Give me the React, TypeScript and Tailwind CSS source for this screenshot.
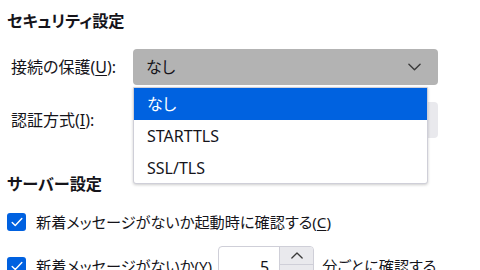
import React from "react";

const Chevron = ({ className = "" }: { className?: string }) => (
  <svg viewBox="0 0 14 8" className={className} fill="none" stroke="currentColor" strokeWidth="1.5" strokeLinecap="round" strokeLinejoin="round">
    <path d="M1 1l6 6 6-6" />
  </svg>
);

const Check = () => (
  <div className="w-[19px] h-[18px] rounded-[3px] bg-[#0061e0] flex items-center justify-center shrink-0">
    <svg viewBox="0 0 16 16" className="w-[14px] h-[14px]" fill="none" stroke="white" strokeWidth="1.6" strokeLinecap="round" strokeLinejoin="round">
      <path d="M2.5 8.5l3.5 3.5 7.5-8" />
    </svg>
  </div>
);

const Key = ({ children }: { children: React.ReactNode }) => <span className="underline underline-offset-2">{children}</span>;

export default function App() {
  return (
    <div className="relative w-[480px] h-[270px] overflow-hidden bg-white text-[#15141a] font-['Noto_Sans','Noto_Sans_CJK_JP',sans-serif] [font-feature-settings:'palt'] text-[16px]">
      <div className="pl-[7px] pt-[9px]">
        {/* Security section */}
        <h2 className="h-[24px] leading-[24px] text-[16.2px] font-bold">セキュリティ設定</h2>

        <div className="mt-[16px] flex items-center">
          <label className="ml-[4px] w-[122px]">
            接続の保護(<Key>U</Key>):
          </label>
          <div className="w-[305px] h-[36px] rounded-[4px] bg-[#b3b3b3] flex items-center justify-between pl-[13px] pr-[17px]">
            <span>なし</span>
            <Chevron className="w-[13px] h-[8px] text-[#3a3a3a]" />
          </div>
        </div>

        <div className="mt-[17px] flex items-center">
          <label className="ml-[4px] w-[122px]">
            認証方式(<Key>I</Key>):
          </label>
          <div className="w-[305px] h-[36px] rounded-[4px] bg-[#e9e9ed]" />
        </div>

        {/* Server section */}
        <h2 className="mt-[34px] h-[24px] leading-[24px] text-[16.2px] font-bold">サーバー設定</h2>

        <div className="mt-[14px] h-[24px] flex items-center gap-[10px] text-[15.2px]">
          <Check />
          <span>
            新着メッセージがないか起動時に確認する(<Key>C</Key>)
          </span>
        </div>

        <div className="mt-[12px] h-[36px] flex items-center text-[15.2px]">
          <div className="mt-[4px] flex items-center">
            <Check />
            <span className="ml-[10px]">
              新着メッセージがないか(<Key>Y</Key>)
            </span>
          </div>
          <div className="ml-[6px] w-[96px] h-[36px] rounded-[4px] border border-[#cfcfd8] flex text-[16px]">
            <div className="flex-1 flex items-center justify-end pr-[10px] pt-[6px]">5</div>
            <div className="w-[34px] flex flex-col">
              <div className="h-[18px] bg-[#e9e9ed] border-l border-b border-[#cfcfd8] rounded-tr-[3px] flex items-center justify-center">
                <Chevron className="w-[12px] h-[7px] rotate-180 text-[#3a3a3a]" />
              </div>
              <div className="flex-1 bg-[#e9e9ed] border-l border-[#cfcfd8] rounded-br-[3px]" />
            </div>
          </div>
          <span className="ml-[8px] mt-[4px]">分ごとに確認する</span>
        </div>
      </div>

      {/* Open dropdown list */}
      <ul className="absolute left-[133px] top-[87px] w-[295px] bg-white border border-[#cfcfd8] rounded-b-[3px] shadow-[0_1px_3px_rgba(0,0,0,0.2)]">
        <li className="h-[32px] flex items-center pl-[13px] bg-[#0062e0] text-white">なし</li>
        <li className="h-[32px] flex items-center pl-[13px]">STARTTLS</li>
        <li className="h-[31px] flex items-center pl-[13px]">SSL/TLS</li>
      </ul>
    </div>
  );
}
